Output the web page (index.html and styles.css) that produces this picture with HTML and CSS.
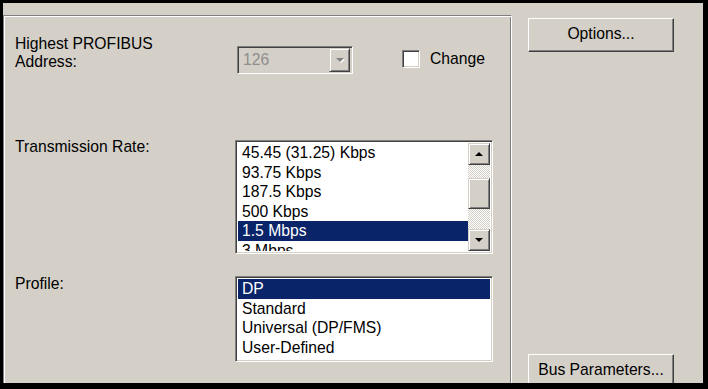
FILE: index.html
```html
<!DOCTYPE html>
<html>
<head>
<meta charset="utf-8">
<link rel="stylesheet" href="styles.css">
</head>
<body>
<div class="window">
  <div class="panel">
    <div class="row row-addr">
      <div class="label">Highest PROFIBUS<br>Address:</div>
      <div class="combo">
        <span class="combo-text">126</span>
        <span class="combo-btn"><span class="arrow-down disabled"></span></span>
      </div>
      <div class="check">
        <span class="check-box"></span>
        <span class="check-label">Change</span>
      </div>
    </div>
    <div class="row row-rate">
      <div class="label">Transmission Rate:</div>
      <div class="listbox list-rate">
        <div class="items">
          <div class="item">45.45 (31.25) Kbps</div>
          <div class="item">93.75 Kbps</div>
          <div class="item">187.5 Kbps</div>
          <div class="item">500 Kbps</div>
          <div class="item selected">1.5 Mbps</div>
          <div class="item">3 Mbps</div>
        </div>
        <div class="scrollbar">
          <div class="sbtn"><span class="arrow-up"></span></div>
          <div class="track"><div class="thumb"></div></div>
          <div class="sbtn"><span class="arrow-down"></span></div>
        </div>
      </div>
    </div>
    <div class="row row-profile">
      <div class="label">Profile:</div>
      <div class="listbox list-profile">
        <div class="items">
          <div class="item selected">DP</div>
          <div class="item">Standard</div>
          <div class="item">Universal (DP/FMS)</div>
          <div class="item">User-Defined</div>
        </div>
      </div>
    </div>
  </div>
  <div class="side">
    <div class="button">Options...</div>
    <div class="button btn-bus">Bus Parameters...</div>
  </div>
</div>
</body>
</html>
```

FILE: styles.css
```css
html, body {
  margin: 0;
  padding: 0;
  background: #000;
}
body {
  width: 708px;
  height: 389px;
  overflow: hidden;
  font-family: "Liberation Sans", Arial, sans-serif;
  font-size: 15.7px;
  color: #000;
}
.window {
  margin: 3px 0 0 3px;
  width: 700px;
  height: 380px;
  background: #d4d0c8;
  display: grid;
  grid-template-columns: 509px 1fr;
  overflow: hidden;
}
.panel {
  margin-top: 12px;
  height: 380px;
  box-sizing: border-box;
  border: 1px solid;
  border-color: #808080 #fff #fff #808080;
  box-shadow: inset 1px 1px #fff, inset -1px -1px #808080;
  padding: 19px 0 0 11px;
}
.row {
  display: flex;
  align-items: flex-start;
}
.label {
  width: 220px;
  line-height: 18px;
  flex: none;
}
.row-rate { margin-top: 64px; }
.row-profile { margin-top: 21px; }

/* combo */
.combo {
  margin: 11px 0 0 2px;
  width: 116px;
  height: 28px;
  box-sizing: border-box;
  border: 1px solid;
  border-color: #808080 #fff #fff #808080;
  box-shadow: inset 1px 1px #404040, inset -1px -1px #d4d0c8;
  background: #d4d0c8;
  display: flex;
  align-items: center;
  justify-content: space-between;
  padding: 2px;
}
.combo-text {
  color: #8e8e8e;
  padding-left: 3px;
  line-height: 18px;
}
.combo-btn {
  width: 21px;
  height: 24px;
  box-sizing: border-box;
  border: 1px solid;
  border-color: #d4d0c8 #404040 #404040 #d4d0c8;
  box-shadow: inset 1px 1px #fff, inset -1px -1px #808080;
  display: flex;
  align-items: center;
  justify-content: center;
}

/* checkbox */
.check {
  margin: 15px 0 0 49px;
  display: flex;
  align-items: center;
}
.check-box {
  width: 18px;
  height: 18px;
  box-sizing: border-box;
  border: 1px solid;
  border-color: #808080 #fff #fff #808080;
  box-shadow: inset 1px 1px #404040, inset -1px -1px #d4d0c8;
  background: #fff;
}
.check-label {
  margin-left: 10px;
  line-height: 18px;
}

/* listboxes */
.listbox {
  width: 258px;
  box-sizing: border-box;
  border: 1px solid;
  border-color: #808080 #fff #fff #808080;
  box-shadow: inset 1px 1px #404040, inset -1px -1px #d4d0c8;
  background: #fff;
  padding: 2px;
  display: flex;
}
.list-rate { margin-top: 2px; height: 114px; }
.list-profile { margin-top: 1px; height: 86px; }
.items {
  flex: 1;
  overflow: hidden;
}
.item {
  height: 19.5px;
  line-height: 19.5px;
  padding-left: 4px;
  white-space: nowrap;
}
.item.selected {
  background: #0a246a;
  color: #fff;
}

/* scrollbar */
.scrollbar {
  width: 22px;
  display: flex;
  flex-direction: column;
}
.sbtn, .thumb {
  box-sizing: border-box;
  border: 1px solid;
  border-color: #d4d0c8 #404040 #404040 #d4d0c8;
  box-shadow: inset 1px 1px #fff, inset -1px -1px #808080;
  background: #d4d0c8;
}
.sbtn {
  height: 22px;
  display: flex;
  align-items: center;
  justify-content: center;
}
.track {
  flex: 1;
  background-color: #fff;
  background-image: repeating-conic-gradient(#d4d0c8 0 25%, #fff 0 50%);
  background-size: 2px 2px;
}
.thumb {
  margin-top: 13px;
  height: 31px;
}
.arrow-up {
  width: 0;
  height: 0;
  border-left: 4px solid transparent;
  border-right: 4px solid transparent;
  border-bottom: 4px solid #000;
}
.arrow-down {
  width: 0;
  height: 0;
  border-left: 4px solid transparent;
  border-right: 4px solid transparent;
  border-top: 4px solid #000;
}
.arrow-down.disabled {
  border-top-color: #808080;
  filter: drop-shadow(1px 1px 0 #fff);
}

/* right column */
.side {
  display: flex;
  flex-direction: column;
  padding: 15px 0 0 16px;
}
.button {
  width: 146px;
  height: 34px;
  flex: none;
  box-sizing: border-box;
  border: 1px solid;
  border-color: #fff #404040 #404040 #fff;
  box-shadow: inset -1px -1px #808080;
  background: #d4d0c8;
  display: flex;
  align-items: center;
  justify-content: center;
  padding-bottom: 3px;
  line-height: 18px;
}
.btn-bus {
  margin-top: 302px;
}
```
